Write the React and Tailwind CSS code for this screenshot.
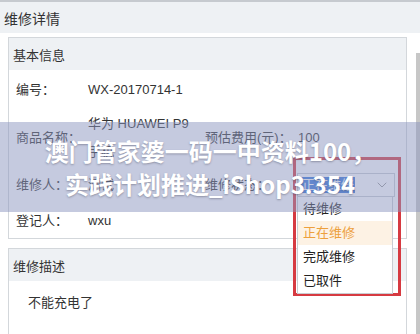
import { ChevronDown } from "lucide-react";

const statusOptions = ["待维修", "正在维修", "完成维修", "已取件"];

function Panel({ title, children }) {
  return (
    <section className="border border-[#d3d7db] bg-white">
      <div className="flex h-[32px] items-center bg-[#eef1f4] pl-1 pt-[4px]">{title}</div>
      {children}
    </section>
  );
}

function Field({ label, className = "", children }) {
  return (
    <div className={`flex items-center ${className}`}>
      <span className="w-[72px] shrink-0">{label}</span>
      {children}
    </div>
  );
}

function StatusSelect() {
  return (
    <div className="relative h-6 w-[98px]">
      <div className="pointer-events-none absolute -left-[4px] -top-[16px] h-[139px] w-[108px] border-[3px] border-[#d63a41]" />
      <div className="flex h-full items-center justify-between border border-[#c9cdd2] bg-white pl-[3px] pr-1">
        <span className="bg-[#3a78db] px-[1px] leading-[16px] text-white">正在维修</span>
        <ChevronDown className="h-4 w-4 text-[#9a9a9a]" strokeWidth={1.5} />
      </div>
      <ul className="absolute left-0 top-full w-[96px] border-x border-b border-[#c9cdd2] bg-white">
        {statusOptions.map((s) => (
          <li
            key={s}
            className={`flex h-6 items-center pl-[5px] ${
              s === "正在维修" ? "bg-[#fdf2e4] text-[#eda03c]" : "text-[#222]"
            }`}
          >
            {s}
          </li>
        ))}
      </ul>
    </div>
  );
}

export default function App() {
  return (
    <div className="relative h-[334px] w-[420px] overflow-hidden border-t-2 border-[#c6cacf] bg-white font-['Liberation_Sans','Noto_Sans_CJK_SC',sans-serif] text-[13px] text-[#333]">
      <div className="flex h-[31px] items-center bg-[#eef1f4] pl-1 pt-[3px] text-[14px]">维修详情</div>

      <div className="flex">
        <div className="flex w-[407px] flex-col gap-[9px] pl-2 pt-[4px]">
          <Panel title="基本信息">
            <div className="flex flex-col pb-[1px] pl-[7px]">
              <Field label="编号：" className="h-[40px]">
                <span>WX-20170714-1</span>
              </Field>
              <div className="flex h-[56px] items-center">
                <Field label="商品名称：" className="w-[189px]">
                  <div className="flex flex-col leading-[28px]">
                    <span>华为 HUAWEI P9</span>
                    <span>手机</span>
                  </div>
                </Field>
                <Field label="预估费用(元)：" className="[&>span:first-child]:w-[93px]">
                  <span>100</span>
                </Field>
              </div>
              <div className="flex h-[38px] items-center">
                <Field label="维修人：" className="w-[189px]">
                  <span>测试</span>
                </Field>
                <Field label="维修状态：" className="[&>span:first-child]:w-[92px]">
                  <StatusSelect />
                </Field>
              </div>
              <Field label="登记人：" className="h-[33px]">
                <span>wxu</span>
              </Field>
            </div>
          </Panel>

          <Panel title="维修描述">
            <p className="h-[80px] pl-[19px] pt-[12px] leading-[20px]">不能充电了</p>
          </Panel>
        </div>
        <div className="ml-auto mt-[20px] h-[300px] w-[4px] bg-[#c7c7c7]" />
      </div>

      <div className="absolute left-0 top-[120px] flex h-[90px] w-full flex-col items-center justify-center bg-[#8c96c0]/50 font-['Noto_Sans_CJK_SC',sans-serif] text-[24px] font-bold leading-[33px] text-white [text-shadow:0_1px_2px_rgba(40,40,60,0.35)]">
        <span>澳门管家婆一码一中资料100，</span>
        <span>实践计划推进_iShop3.354</span>
      </div>
    </div>
  );
}
